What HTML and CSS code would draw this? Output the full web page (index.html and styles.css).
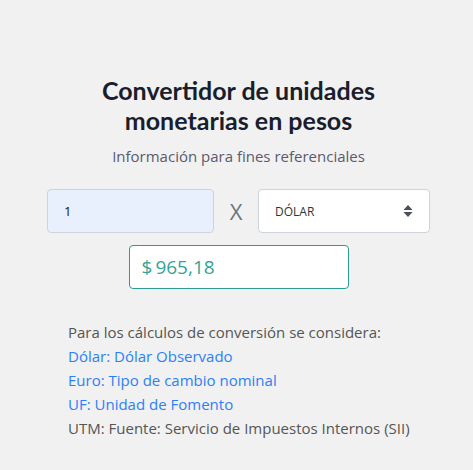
FILE: index.html
```html
<!DOCTYPE html>
<html>
<head>
    <title>Convertidor</title>
    <link rel="stylesheet" href="styles.css">
</head>
<body>
    <div class="container">
        <h1>Convertidor de unidades<br>monetarias en pesos</h1>
        <p class="subtitle">Información para fines referenciales</p>

        <div class="inputs">
            <div class="field amount">1</div>
            <span class="times">X</span>
            <div class="field select">
                <span>DÓLAR</span>
                <svg width="10" height="14" viewBox="0 0 10 14">
                    <path d="M5 1 L9.5 6 L0.5 6 Z" fill="#4a4f57"/>
                    <path d="M5 13 L9.5 8 L0.5 8 Z" fill="#4a4f57"/>
                </svg>
            </div>
        </div>

        <div class="result">$<span class="amount-value">965,18</span></div>

        <div class="info">
            <p>Para los cálculos de conversión se considera:</p>
            <p class="link">Dólar: Dólar Observado</p>
            <p class="link">Euro: Tipo de cambio nominal</p>
            <p class="link">UF: Unidad de Fomento</p>
            <p>UTM: Fuente: Servicio de Impuestos Internos (SII)</p>
        </div>
    </div>
</body>
</html>
```
FILE: styles.css
```css
body {
    font-family: "Open Sans", sans-serif;
    background-color: #f1f1f1;
    margin: 0;
    padding: 0 0 0 4px;
}

.container {
    width: 383px;
    margin: 0 auto;
    padding-top: 75px;
}

h1 {
    font-family: Lato, sans-serif;
    font-weight: 700;
    font-size: 25px;
    line-height: 30px;
    color: #1a1e2c;
    text-align: center;
    margin: 0;
}

.subtitle {
    text-align: center;
    font-size: 15px;
    color: #5b5a6e;
    margin: 11px 0 0;
}

.inputs {
    display: flex;
    align-items: center;
    margin-top: 23px;
}

.field {
    box-sizing: border-box;
    height: 44px;
    border: 1px solid #ced4da;
    border-radius: 4px;
    display: flex;
    align-items: center;
}

.amount {
    width: 167px;
    background-color: #e8f0fe;
    padding-left: 16px;
    font-size: 13px;
    color: #111;
}

.times {
    width: 44px;
    text-align: center;
    font-size: 22px;
    color: #6c757d;
}

.select {
    width: 172px;
    background-color: #fff;
    padding: 0 16px;
    justify-content: space-between;
    font-size: 12px;
    color: #333;
}

.result {
    box-sizing: border-box;
    width: 220px;
    height: 44px;
    margin: 12px auto 0;
    border: 1px solid #2a9d8f;
    border-radius: 4px;
    background-color: #fff;
    color: #35a394;
    font-size: 19px;
    padding-left: 12px;
    display: flex;
    align-items: center;
}

.amount-value {
    margin-left: 3px;
}

.info {
    margin-top: 31px;
    padding-left: 21px;
    font-size: 15px;
    line-height: 24px;
    color: #555;
}

.info p {
    margin: 0;
}

.info .link {
    color: #2d7ff9;
}
```
